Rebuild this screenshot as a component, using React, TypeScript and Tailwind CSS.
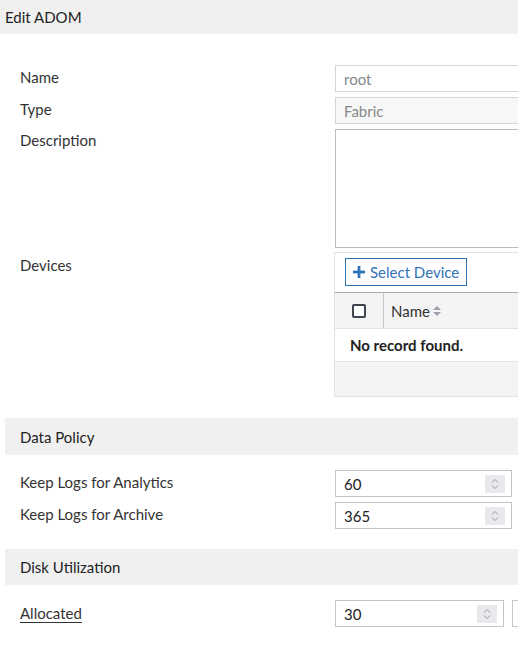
import React from "react";

const Spinner = () => (
  <div className="absolute right-[6px] top-1/2 -translate-y-1/2 w-[20px] h-[18px] bg-[#e8e8ed] flex flex-col items-center justify-center">
    <svg width="8" height="12" viewBox="0 0 8 12" fill="none" stroke="#9a9aa3" strokeWidth="1">
      <path d="M1 4.5 L4 1.5 L7 4.5" />
      <path d="M1 7.5 L4 10.5 L7 7.5" />
    </svg>
  </div>
);

const NumInput = ({ value, w }: { value: string; w: string }) => (
  <div className={`relative h-[27px] border border-[#c4c4c4] bg-white flex items-center pl-[8px] text-[15px] text-[#222] ${w}`}>
    {value}
    <Spinner />
  </div>
);

export default function App() {
  return (
    <div className="w-[518px] h-[648px] overflow-hidden bg-white text-[#333] text-[15px] leading-[20px]" style={{ fontFamily: "Lato, 'Open Sans', sans-serif" }}>
      <div className="h-[34px] bg-[#f0f0f0] flex items-center px-[5px] text-[#222]">Edit ADOM</div>

      <div className="pl-[20px] pt-[31px] flex flex-col gap-[5px]">
        <div className="flex">
          <div className="w-[315px] shrink-0 pt-[2px]">Name</div>
          <div className="w-[300px] shrink-0 h-[27px] border border-[#d6d6d6] bg-white flex items-center pl-[8px] text-[#888]">root</div>
        </div>
        <div className="flex">
          <div className="w-[315px] shrink-0 pt-[2px]">Type</div>
          <div className="w-[300px] shrink-0 h-[27px] border border-[#d6d6d6] bg-[#f7f7f7] flex items-center pl-[8px] text-[#888]">Fabric</div>
        </div>
        <div className="flex">
          <div className="w-[315px] shrink-0 pt-[1px]">Description</div>
          <div className="w-[300px] shrink-0 h-[119px] border border-[#b9bcc1] bg-white" />
        </div>
        <div className="flex -mt-[1px]">
          <div className="w-[314px] shrink-0 pt-[3px]">Devices</div>
          <div className="w-[300px] shrink-0 border border-[#e2e2e2] flex flex-col">
            <div className="h-[39px] pl-[10px] pt-[5px]">
              <div className="inline-flex items-center h-[28px] px-[7px] border border-[#2f73b7] text-[#2f73b7] gap-[5px]">
                <svg width="12" height="12" viewBox="0 0 12 12" fill="#2f73b7">
                  <rect x="4.6" y="0" width="2.8" height="12" />
                  <rect x="0" y="4.6" width="12" height="2.8" />
                </svg>
                <span>Select Device</span>
              </div>
            </div>
            <div className="h-[37px] bg-[#f4f4f4] border-t border-[#a7abb1] border-b border-b-[#e2e2e2] flex">
              <div className="w-[49px] border-r border-[#c8c8c8] flex items-center justify-center">
                <div className="w-[14px] h-[14px] border-2 border-[#3d4550] rounded-[2px] bg-white" />
              </div>
              <div className="flex items-center pl-[7px] gap-[2px] text-[#333]">
                <span>Name</span>
                <svg width="10" height="12" viewBox="0 0 10 12" fill="#9aa0a8">
                  <path d="M1 5 L5 1 L9 5 Z" />
                  <path d="M1 7 L5 11 L9 7 Z" />
                </svg>
              </div>
            </div>
            <div className="h-[33px] flex items-center pl-[15px] font-bold text-[#222] border-b border-[#e2e2e2]">No record found.</div>
            <div className="h-[34px] bg-[#f4f4f4]" />
          </div>
        </div>
      </div>

      <div className="mt-[21px] ml-[5px] h-[37px] bg-[#f0f0f0] flex items-center pl-[15px] text-[#222]">Data Policy</div>
      <div className="pl-[20px] pt-[15px] flex flex-col gap-[5px]">
        <div className="flex">
          <div className="w-[315px] shrink-0 pt-[2px]">Keep Logs for Analytics</div>
          <NumInput value="60" w="w-[177px]" />
        </div>
        <div className="flex">
          <div className="w-[315px] shrink-0 pt-[2px]">Keep Logs for Archive</div>
          <NumInput value="365" w="w-[177px]" />
        </div>
      </div>

      <div className="mt-[20px] ml-[5px] h-[36px] bg-[#f0f0f0] flex items-center pl-[15px] text-[#222]">Disk Utilization</div>
      <div className="pl-[20px] pt-[15px] flex">
        <div className="w-[315px] shrink-0 pt-[3px]">
          <span className="underline underline-offset-[3px]">Allocated</span>
        </div>
        <NumInput value="30" w="w-[169px] shrink-0" />
        <div className="ml-[8px] w-[100px] shrink-0 h-[27px] border border-[#c4c4c4]" />
      </div>
    </div>
  );
}
